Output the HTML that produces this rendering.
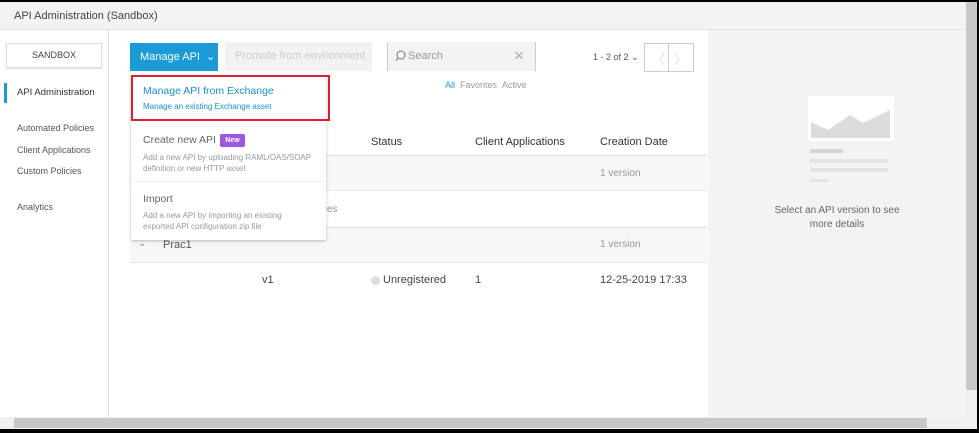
<!DOCTYPE html>
<html><head><style>
*{box-sizing:border-box;margin:0;padding:0}
body{width:979px;height:433px;overflow:hidden;background:#000;font-family:"Liberation Sans",sans-serif;position:relative}
.a{position:absolute}
.t{font-size:11px;color:#555;white-space:nowrap}
</style></head><body>
<div class="a" style="left:0;top:2px;width:977px;height:427px;background:#fff"></div>
<div class="a" style="left:0;top:2px;width:977px;height:28px;background:#f3f3f3;border-bottom:1px solid #e4e4e4"></div>
<div class="a t" style="left:14px;top:10px;font-size:11px;color:#444">API Administration (Sandbox)</div>
<!-- sidebar -->
<div class="a" style="left:108px;top:30px;width:1px;height:387px;background:#e0e0e0"></div>
<div class="a" style="left:6px;top:43px;width:96px;height:25px;border:1px solid #ddd;box-shadow:0 1px 1px #ddd;font-size:9px;color:#444;text-align:center;line-height:23px">SANDBOX</div>
<div class="a" style="left:4px;top:83px;width:3px;height:20px;background:#1a9bd7"></div>
<div class="a t" style="left:17px;top:87px;font-size:9.5px;color:#333">API Administration</div>
<div class="a t" style="left:17px;top:123px;font-size:9px">Automated Policies</div>
<div class="a t" style="left:17px;top:145px;font-size:9px">Client Applications</div>
<div class="a t" style="left:17px;top:166px;font-size:9px">Custom Policies</div>
<div class="a t" style="left:17px;top:202px;font-size:9px">Analytics</div>
<!-- toolbar -->
<div class="a" style="left:130px;top:43px;width:88px;height:28px;background:#1a9bd7;color:#fff;font-size:11px;line-height:28px;padding-left:10px">Manage API &nbsp;⌄</div>
<div class="a t" style="left:225px;top:42px;width:147px;height:29px;background:#f2f2f2;color:#ccc;line-height:29px;padding-left:10px">Promote from environment</div>
<div class="a" style="left:387px;top:42px;width:149px;height:29px;background:#f2f3f4;border-left:1px solid #ccc;border-right:1px solid #ccc"></div>
<svg class="a" style="left:395px;top:50px" width="12" height="12"><circle cx="6" cy="5" r="4" fill="none" stroke="#777"/><line x1="3" y1="8" x2="1" y2="11" stroke="#777"/></svg>
<div class="a t" style="left:408px;top:50px;color:#999">Search</div>
<div class="a" style="left:514px;top:46px;font-size:17px;color:#aaa">×</div>
<div class="a t" style="left:593px;top:52px;font-size:9px;color:#555">1 - 2 of 2 ⌄</div>
<div class="a" style="left:644px;top:43px;width:50px;height:29px;border:1px solid #ccc"></div>
<div class="a" style="left:668px;top:43px;width:1px;height:29px;background:#ccc"></div>
<div class="a t" style="left:652px;top:49px;font-size:13px;color:#ddd">〈</div>
<div class="a t" style="left:674px;top:49px;font-size:13px;color:#ddd">〉</div>
<div class="a t" style="left:445px;top:80px;font-size:9px;color:#999"><span style="color:#1a9bd7">All</span>&nbsp; Favorites &nbsp;Active</div>
<!-- table -->
<div class="a t" style="left:371px;top:136px;font-size:11px;color:#333">Status</div>
<div class="a t" style="left:475px;top:136px;font-size:11px;color:#333">Client Applications</div>
<div class="a t" style="left:600px;top:136px;font-size:11px;color:#333">Creation Date</div>
<div class="a" style="left:130px;top:155px;width:577px;height:36px;background:#f6f7f8;border-top:1px solid #e3e3e3;border-bottom:1px solid #e8e8e8"></div>
<div class="a t" style="left:600px;top:168px;font-size:10px;color:#999">1 version</div>
<div class="a t" style="left:322px;top:204px;font-size:10px;color:#999">ces</div>
<div class="a" style="left:130px;top:227px;width:577px;height:36px;background:#f6f7f8;border-top:1px solid #e3e3e3;border-bottom:1px solid #e8e8e8"></div>
<div class="a t" style="left:138px;top:238px;font-size:10px;color:#888">⌄</div>
<div class="a t" style="left:163px;top:239px;font-size:11px;color:#555">Prac1</div>
<div class="a t" style="left:600px;top:239px;font-size:10px;color:#999">1 version</div>
<div class="a t" style="left:262px;top:274px;font-size:11px;color:#444">v1</div>
<div class="a" style="left:371px;top:276px;width:9px;height:9px;border-radius:50%;background:#ddd"></div>
<div class="a t" style="left:383px;top:274px;font-size:11px;color:#444">Unregistered</div>
<div class="a t" style="left:475px;top:274px;font-size:11px;color:#444">1</div>
<div class="a t" style="left:600px;top:274px;font-size:11px;color:#444">12-25-2019 17:33</div>
<!-- dropdown -->
<div class="a" style="left:131px;top:74px;width:195px;height:166px;background:#fff;box-shadow:0 1px 3px rgba(0,0,0,.25)"></div>
<div class="a" style="left:131px;top:75px;width:199px;height:46px;border:2px solid #d8232a"></div>
<div class="a t" style="left:143px;top:85px;font-size:10.5px;color:#1a8fd0">Manage API from Exchange</div>
<div class="a t" style="left:143px;top:102px;font-size:8px;color:#1a8fd0">Manage an existing Exchange asset</div>
<div class="a t" style="left:143px;top:134px;font-size:10.5px;color:#666">Create new API</div>
<div class="a" style="left:220px;top:134px;width:25px;height:13px;background:#9b59e0;border-radius:2px;color:#fff;font-size:7px;font-weight:bold;text-align:center;line-height:13px">New</div>
<div class="a t" style="left:143px;top:152px;font-size:8px;color:#999;line-height:11px">Add a new API by uploading RAML/OAS/SOAP<br>definition or new HTTP asset</div>
<div class="a" style="left:132px;top:181px;width:193px;height:1px;background:#eee"></div>
<div class="a t" style="left:143px;top:193px;font-size:10.5px;color:#666">Import</div>
<div class="a t" style="left:143px;top:210px;font-size:8px;color:#999;line-height:11px">Add a new API by importing an existing<br>exported API configuration zip file</div>
<!-- right panel -->
<div class="a" style="left:708px;top:30px;width:258px;height:387px;background:#f2f3f4"></div>
<div class="a" style="left:808px;top:96px;width:86px;height:45px;background:#fff"></div>
<svg class="a" style="left:810px;top:110px" width="82" height="30"><polygon points="1,12 18,20 40,5 53,13 80,0 80,28 1,28" fill="#dcdcdc"/></svg>
<div class="a" style="left:810px;top:149px;width:33px;height:4px;background:#d5d5d5"></div>
<div class="a" style="left:810px;top:159px;width:78px;height:4px;background:#e4e4e4"></div>
<div class="a" style="left:810px;top:168px;width:78px;height:4px;background:#e4e4e4"></div>
<div class="a" style="left:810px;top:179px;width:19px;height:3px;background:#e4e4e4"></div>
<div class="a" style="left:770px;top:204px;width:134px;text-align:center;font-size:10px;color:#666;line-height:14px">Select an API version to see<br>more details</div>
<!-- scrollbars -->
<div class="a" style="left:966px;top:2px;width:11px;height:415px;background:#c8c8c8"></div>
<div class="a" style="left:966px;top:390px;width:11px;height:27px;background:#f0f0f0"></div>
<div class="a" style="left:0;top:417px;width:977px;height:12px;background:#f0f0f0"></div>
<div class="a" style="left:14px;top:418px;width:913px;height:10px;background:#c8c8c8"></div>
</body></html>
